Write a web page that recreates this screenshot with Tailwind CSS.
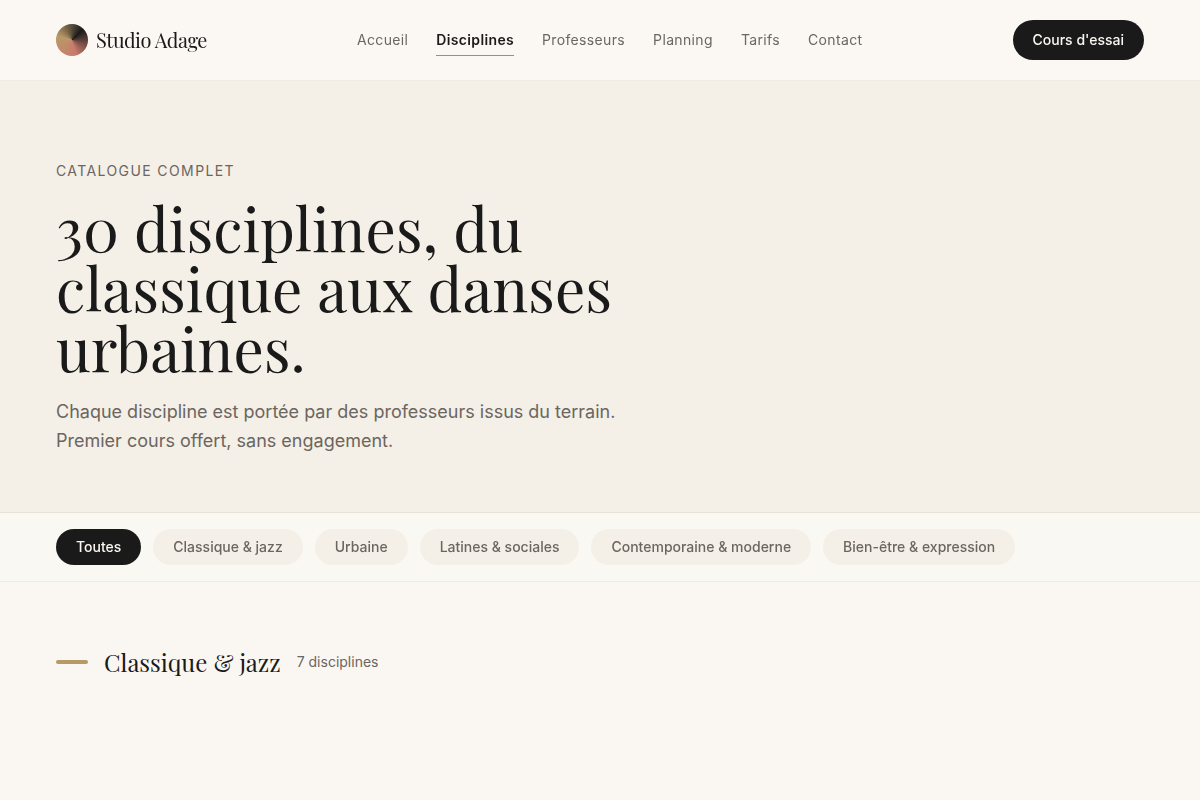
<!DOCTYPE html>
<html lang="fr">
<head>
    <meta charset="UTF-8">
    <meta name="viewport" content="width=device-width, initial-scale=1.0">
    <title>Disciplines - Studio Adage</title>
    <script src="https://cdn.jsdelivr.net/npm/@tailwindcss/browser@4"></script>
</head>
<body class="bg-[#faf7f2] text-[#1a1a1a] font-['Inter',sans-serif] h-[800px] overflow-hidden">

    <!-- Header -->
    <header class="h-[81px] px-14 flex items-center justify-between border-b border-[#f0ebe4] bg-[#fbf8f3] backdrop-blur-md will-change-transform">
        <a href="#" class="flex items-center gap-2">
            <span class="size-8 rounded-full bg-[conic-gradient(from_45deg,#1a1a1a,#c97b6b,#b89968,#1a1a1a)]"></span>
            <span class="font-['Playfair_Display','Liberation_Serif',serif] text-xl tracking-tight">Studio Adage</span>
        </a>
        <nav class="flex gap-7 text-sm tracking-wide text-[#6b6660]">
            <a href="#" class="py-1.5">Accueil</a>
            <a href="#" class="pt-1.5 pb-[5px] border-b border-[#c97b6b] text-[#1a1a1a] font-semibold">Disciplines</a>
            <a href="#" class="py-1.5">Professeurs</a>
            <a href="#" class="py-1.5">Planning</a>
            <a href="#" class="py-1.5">Tarifs</a>
            <a href="#" class="py-1.5">Contact</a>
        </nav>
        <a href="#" class="h-10 px-5 flex items-center rounded-full bg-[#1a1a1a] text-[#faf7f2] text-sm font-medium">Cours d'essai</a>
    </header>

    <!-- Hero -->
    <section class="h-[432px] px-14 pt-20 bg-[#f4efe7] border-b border-[#e8e1d8]">
        <p class="text-sm tracking-widest uppercase text-[#6b6660]">Catalogue complet</p>
        <h1 class="mt-4 max-w-[620px] font-['Playfair_Display','Liberation_Serif',serif] text-6xl">30 disciplines, du classique aux danses urbaines.</h1>
        <p class="mt-5 max-w-[600px] text-lg leading-[29px] text-[#6b6660]">Chaque discipline est portée par des professeurs issus du terrain. Premier cours offert, sans engagement.</p>
    </section>

    <!-- Filters -->
    <div class="h-[69px] px-14 flex items-center gap-3 bg-[#faf8f3] border-b border-[#eeebe5] text-sm font-medium text-[#6b6660] will-change-transform">
        <button class="h-9 px-5 rounded-full bg-[#1a1a1a] text-[#faf7f2]">Toutes</button>
        <button class="h-9 px-5 rounded-full bg-[#f4efe7]">Classique &amp; jazz</button>
        <button class="h-9 px-5 rounded-full bg-[#f4efe7]">Urbaine</button>
        <button class="h-9 px-5 rounded-full bg-[#f4efe7]">Latines &amp; sociales</button>
        <button class="h-9 px-5 rounded-full bg-[#f4efe7]">Contemporaine &amp; moderne</button>
        <button class="h-9 px-5 rounded-full bg-[#f4efe7]">Bien-être &amp; expression</button>
    </div>

    <!-- Category -->
    <section class="px-14 pt-16">
        <div class="flex items-center gap-4">
            <span class="w-8 h-1 rounded-full bg-[#b89968]"></span>
            <h2 class="font-['Playfair_Display','Liberation_Serif',serif] text-2xl">Classique &amp; jazz</h2>
            <span class="text-sm text-[#6b6660]">7 disciplines</span>
        </div>
    </section>

</body>
</html>
